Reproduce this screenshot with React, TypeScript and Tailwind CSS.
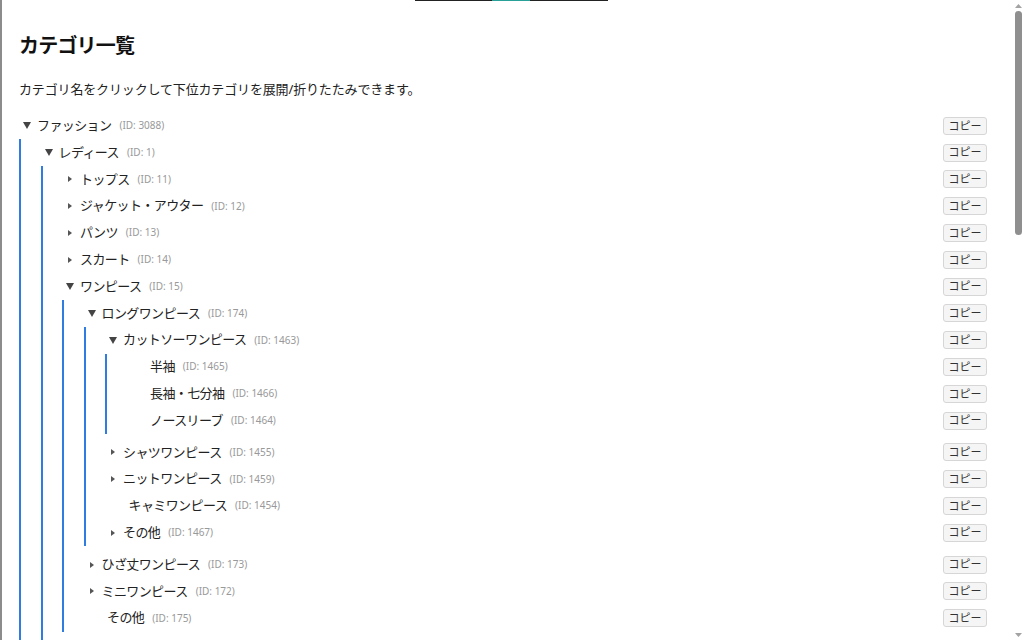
import { useState } from 'react';

type Category = {
  id: number;
  name: string;
  children?: Category[];
};

const categories: Category[] = [
  {
    id: 3088,
    name: 'ファッション',
    children: [
      {
        id: 1,
        name: 'レディース',
        children: [
          { id: 11, name: 'トップス', children: [] },
          { id: 12, name: 'ジャケット・アウター', children: [] },
          { id: 13, name: 'パンツ', children: [] },
          { id: 14, name: 'スカート', children: [] },
          {
            id: 15,
            name: 'ワンピース',
            children: [
              {
                id: 174,
                name: 'ロングワンピース',
                children: [
                  {
                    id: 1463,
                    name: 'カットソーワンピース',
                    children: [
                      { id: 1465, name: '半袖' },
                      { id: 1466, name: '長袖・七分袖' },
                      { id: 1464, name: 'ノースリーブ' },
                    ],
                  },
                  { id: 1455, name: 'シャツワンピース', children: [] },
                  { id: 1459, name: 'ニットワンピース', children: [] },
                  { id: 1454, name: 'キャミワンピース' },
                  { id: 1467, name: 'その他', children: [] },
                ],
              },
              { id: 173, name: 'ひざ丈ワンピース', children: [] },
              { id: 172, name: 'ミニワンピース', children: [] },
              { id: 175, name: 'その他' },
            ],
          },
          { id: 16, name: 'オールインワン・サロペット', children: [] },
          { id: 17, name: 'スーツ・セットアップ', children: [] },
        ],
      },
      { id: 2, name: 'メンズ', children: [] },
    ],
  },
];

const initiallyOpen = [3088, 1, 15, 174, 1463];

function Caret({ isOpen }: { isOpen: boolean }) {
  if (isOpen) {
    return (
      <svg width="8" height="7" viewBox="0 0 8 7">
        <path d="M0 0h8L4 7z" fill="#444" />
      </svg>
    );
  }
  return (
    <svg width="4" height="6" viewBox="0 0 4 6">
      <path d="M0 0l4 3-4 3z" fill="#555" />
    </svg>
  );
}

type NodeProps = {
  node: Category;
  openIds: number[];
  onToggle: (id: number) => void;
};

function CategoryNode({ node, openIds, onToggle }: NodeProps) {
  const hasChildren = node.children !== undefined;
  const isOpen = openIds.includes(node.id);

  function handleCopy() {
    navigator.clipboard?.writeText(String(node.id)).catch(() => {});
  }

  return (
    <div>
      <div className="flex h-[26.8px] items-center justify-between">
        <div className="flex items-center">
          {hasChildren ? (
            <button
              type="button"
              onClick={() => onToggle(node.id)}
              className="mr-[2px] flex w-4 items-center justify-center"
            >
              <Caret isOpen={isOpen} />
            </button>
          ) : (
            <span className="w-[23.5px]" />
          )}
          <span
            onClick={() => hasChildren && onToggle(node.id)}
            className="cursor-pointer text-[13px] tracking-[-0.6px] text-[#222]"
          >
            {node.name}
          </span>
          <span className="ml-[8px] text-[10px] text-[#999]">(ID: {node.id})</span>
        </div>
        <button
          type="button"
          onClick={handleCopy}
          className="flex h-[18px] w-[44px] items-center justify-center rounded-[3px] border border-[#d6d6d6] bg-[#f5f5f5] text-[11px] text-[#333]"
        >
          コピー
        </button>
      </div>

      {isOpen && node.children !== undefined && node.children.length > 0 && (
        <div className="mb-[5px] border-l-2 border-[#2f7de1] pl-[19.5px]">
          {node.children.map((child) => (
            <CategoryNode key={child.id} node={child} openIds={openIds} onToggle={onToggle} />
          ))}
        </div>
      )}
    </div>
  );
}

function Scrollbar() {
  return (
    <aside className="flex w-[17px] flex-col items-end bg-white pr-[2px]">
      <div className="flex h-[11px] w-[7px] items-center justify-center">
        <svg width="7" height="4" viewBox="0 0 7 4">
          <path d="M0 4L3.5 0 7 4z" fill="#a3a3a3" />
        </svg>
      </div>
      <div className="h-[224px] w-[7px] rounded-full bg-[#8f8f8f]" />
      <div className="flex-1" />
      <div className="flex h-[11px] w-[7px] items-center justify-center">
        <svg width="7" height="4" viewBox="0 0 7 4">
          <path d="M0 0h7L3.5 4z" fill="#a3a3a3" />
        </svg>
      </div>
    </aside>
  );
}

export default function App() {
  const [openIds, setOpenIds] = useState<number[]>(initiallyOpen);

  function handleToggle(id: number) {
    setOpenIds((prev) => (prev.includes(id) ? prev.filter((x) => x !== id) : [...prev, id]));
  }

  return (
    <div className="relative flex h-[640px] overflow-hidden bg-white font-['Noto_Sans','Noto_Sans_CJK_JP',sans-serif]">
      <div className="absolute left-[415px] top-0 flex h-px w-[193px] bg-[#222]">
        <div className="ml-[77px] h-px w-[38px] bg-[#2aa198]" />
      </div>

      <main className="flex-1 border-l-2 border-[#8c8c8c] pl-[17px] pr-[20px] pt-[30px]">
        <h1 className="text-[20px] font-bold leading-[32px] tracking-[-0.8px] text-[#111]">
          カテゴリ一覧
        </h1>
        <p className="mt-[17px] text-[13px] leading-[20px] tracking-[-0.15px] text-[#222]">
          カテゴリ名をクリックして下位カテゴリを展開/折りたたみできます。
        </p>

        <div className="mt-[13.4px]">
          {categories.map((category) => (
            <CategoryNode
              key={category.id}
              node={category}
              openIds={openIds}
              onToggle={handleToggle}
            />
          ))}
        </div>
      </main>

      <Scrollbar />
    </div>
  );
}
